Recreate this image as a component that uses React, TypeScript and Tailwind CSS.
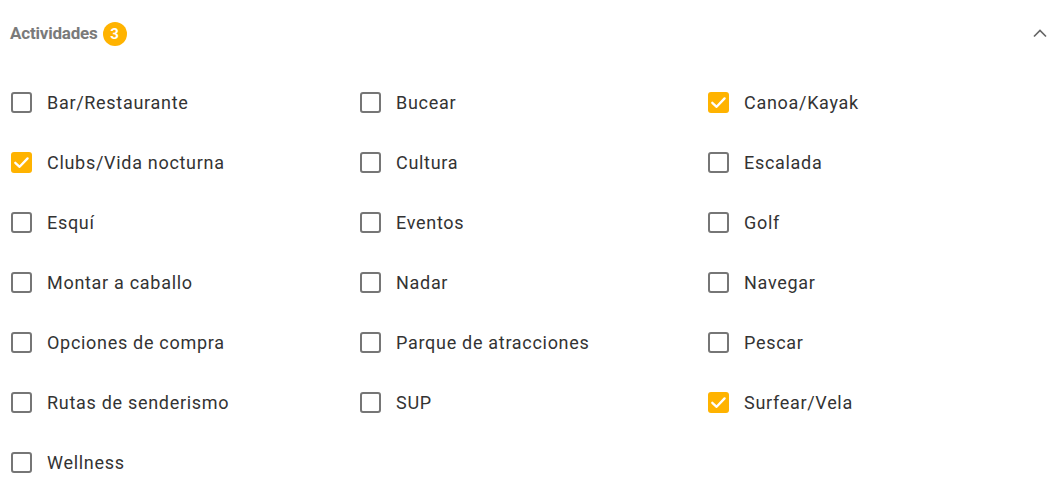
import React from "react";

const items: [string, boolean][] = [
  ["Bar/Restaurante", false],
  ["Bucear", false],
  ["Canoa/Kayak", true],
  ["Clubs/Vida nocturna", true],
  ["Cultura", false],
  ["Escalada", false],
  ["Esquí", false],
  ["Eventos", false],
  ["Golf", false],
  ["Montar a caballo", false],
  ["Nadar", false],
  ["Navegar", false],
  ["Opciones de compra", false],
  ["Parque de atracciones", false],
  ["Pescar", false],
  ["Rutas de senderismo", false],
  ["SUP", false],
  ["Surfear/Vela", true],
  ["Wellness", false],
];

function Box({ checked }: { checked: boolean }) {
  if (checked) {
    return (
      <span className="flex h-[21px] w-[21px] items-center justify-center rounded-[3px] bg-[#ffb300]">
        <svg width="21" height="21" viewBox="0 0 21 21" fill="none">
          <path d="M4.3 10.8 L8.6 14.8 L16.6 6.4" stroke="#fff" strokeWidth="2.3" strokeLinecap="round" strokeLinejoin="round" />
        </svg>
      </span>
    );
  }
  return <span className="box-border block h-[21px] w-[21px] rounded-[3px] border-2 border-[#767676] bg-white" />;
}

export default function App() {
  return (
    <div className="w-[1060px] h-[489px] bg-white font-['Roboto','Liberation_Sans',sans-serif] overflow-hidden">
      <div className="flex h-[67px] items-center justify-between pl-[10px] pr-[12px] pt-[1px]">
        <div className="flex items-center gap-[5px]">
          <span className="text-[17px] font-bold tracking-[-0.2px] text-[#7a7a7a]">Actividades</span>
          <span className="flex h-[24px] w-[24px] items-center justify-center rounded-full bg-[#ffb300] text-[15px] font-bold text-white">3</span>
        </div>
        <svg width="16" height="16" viewBox="0 0 16 16" fill="none">
          <path d="M2 10.5 L8 4.5 L14 10.5" stroke="#666" strokeWidth="1.7" />
        </svg>
      </div>
      <div className="grid grid-cols-[349px_348px_1fr] pl-[11px] pt-[5px]">
        {items.map(([label, checked]) => (
          <label key={label} className="flex h-[60px] items-center gap-[15px]">
            <Box checked={checked} />
            <span className="text-[18px] text-[#333333] tracking-[0.7px]">{label}</span>
          </label>
        ))}
      </div>
    </div>
  );
}
